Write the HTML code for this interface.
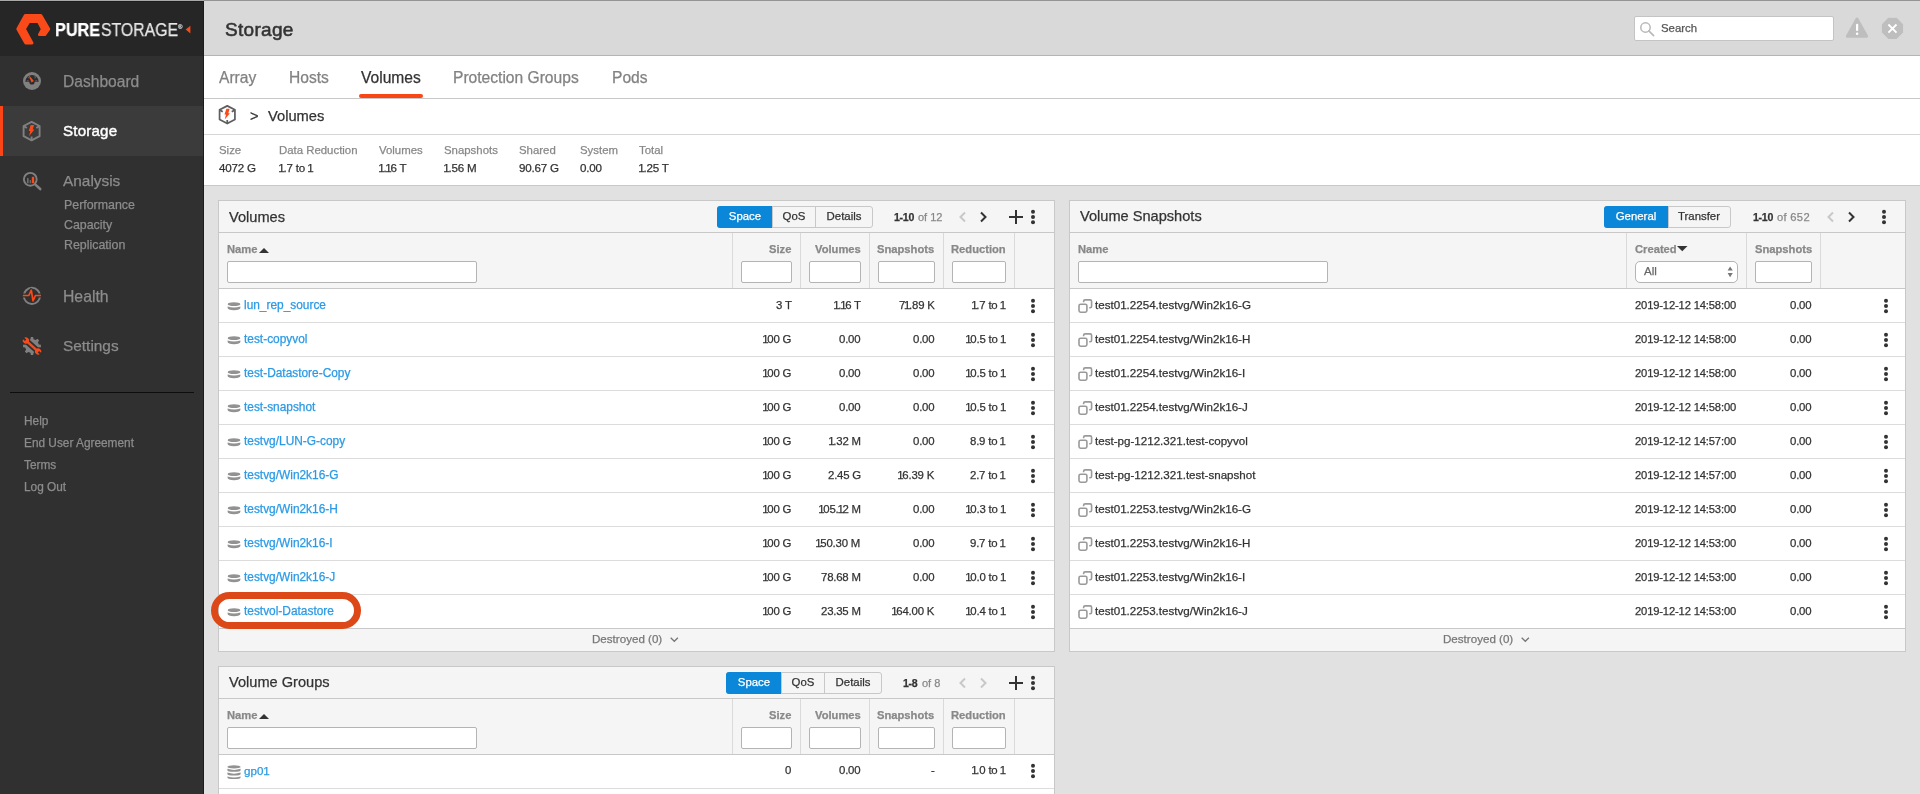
<!DOCTYPE html>
<html><head><meta charset="utf-8"><title>Storage</title><style>
*{margin:0;padding:0;box-sizing:border-box}
html,body{width:1920px;height:794px;overflow:hidden;background:#e1e1e1;font-family:"Liberation Sans",sans-serif}
.t{position:absolute;white-space:pre;will-change:transform;-webkit-text-stroke-width:0.25px}
.r{position:absolute}
svg{position:absolute;overflow:visible}
</style></head><body>
<div class="r" style="left:0px;top:0px;width:204px;height:794px;background:#303030"></div>
<div class="r" style="left:0px;top:0px;width:204px;height:56px;background:#262626"></div>
<div class="r" style="left:0px;top:106px;width:204px;height:50px;background:#3b3b3b"></div>
<div class="r" style="left:0px;top:106px;width:3px;height:50px;background:#fa4616"></div>
<div class="r" style="left:203px;top:0px;width:1px;height:794px;background:#1c1c1c"></div>
<svg style="left:0;top:0" width="204" height="56"><path d="M25.28,15.60 L40.84,15.60 L48.71,29.02 L44.73,34.60 L39.42,34.60 L42.40,29.11 L38.30,21.40 L28.84,21.40 L24.38,29.08 L31.97,43.00 L25.77,43.00 L17.82,29.09 Z" fill="#fa4a1a" stroke="#fa4a1a" stroke-width="3" stroke-linejoin="round"/><path d="M190.4,25.8 L185.7,29.6 L190.4,33.5 Z" fill="#fa4a1a"/></svg>
<div class="t" style="left:55.00px;top:21.39px;font-size:18.2px;line-height:18.2px;color:#fff;font-weight:700;transform:scaleX(0.89);transform-origin:0 0">PURE</div>
<div class="t" style="left:100.50px;top:21.39px;font-size:18.2px;line-height:18.2px;color:#e8e8e8;transform:scaleX(0.865);transform-origin:0 0;letter-spacing:0.1px">STORAGE</div>
<div class="t" style="left:178.00px;top:23.52px;font-size:6px;line-height:6px;color:#ccc;">®</div>
<div class="t" style="left:62.90px;top:73.59px;font-size:15.6px;line-height:15.6px;color:#8c8c8c;">Dashboard</div>
<div class="t" style="left:62.90px;top:123.42px;font-size:15.1px;line-height:15.1px;color:#fff;-webkit-text-stroke:0.45px #fff;letter-spacing:0.2px">Storage</div>
<div class="t" style="left:62.90px;top:172.96px;font-size:15.4px;line-height:15.4px;color:#8c8c8c;">Analysis</div>
<div class="t" style="left:62.90px;top:288.57px;font-size:15.75px;line-height:15.75px;color:#8c8c8c;">Health</div>
<div class="t" style="left:62.90px;top:338.16px;font-size:15.4px;line-height:15.4px;color:#8c8c8c;">Settings</div>
<div class="t" style="left:63.90px;top:199.10px;font-size:12.4px;line-height:12.4px;color:#8c8c8c;">Performance</div>
<div class="t" style="left:63.90px;top:219.10px;font-size:12.4px;line-height:12.4px;color:#8c8c8c;">Capacity</div>
<div class="t" style="left:63.90px;top:239.10px;font-size:12.4px;line-height:12.4px;color:#8c8c8c;">Replication</div>
<div class="r" style="left:10px;top:392px;width:184px;height:1px;background:#0d0d0d"></div>
<div class="t" style="left:24.30px;top:415.87px;font-size:11.85px;line-height:11.85px;color:#8c8c8c;">Help</div>
<div class="t" style="left:24.30px;top:437.87px;font-size:11.85px;line-height:11.85px;color:#8c8c8c;">End User Agreement</div>
<div class="t" style="left:24.30px;top:459.87px;font-size:11.85px;line-height:11.85px;color:#8c8c8c;">Terms</div>
<div class="t" style="left:24.30px;top:481.77px;font-size:11.85px;line-height:11.85px;color:#8c8c8c;">Log Out</div>
<div class="r" style="left:0px;top:0px;width:204px;height:1px;background:#a9a9a9"></div>
<div class="r" style="left:204px;top:0px;width:1716px;height:1px;background:#949494"></div>
<div class="r" style="left:204px;top:1px;width:1716px;height:1px;background:#e2e2e2"></div>
<div class="r" style="left:204px;top:1px;width:1px;height:54px;background:#e4e4e4"></div>
<div class="r" style="left:0px;top:1px;width:203px;height:1px;background:#1e1e1e"></div>
<div class="r" style="left:204px;top:1px;width:1716px;height:54px;background:#d9d9d9"></div>
<div class="r" style="left:204px;top:55px;width:1716px;height:1px;background:#b5b5b5"></div>
<div class="t" style="left:224.60px;top:20.12px;font-size:19.0px;line-height:19.0px;color:#333;-webkit-text-stroke:0.55px #333;letter-spacing:0.3px">Storage</div>
<div class="r" style="left:1634px;top:16px;width:200px;height:25px;background:#fff;border:1px solid #c4c4c4;border-radius:2px"></div>
<div class="t" style="left:1661.30px;top:22.55px;font-size:11.4px;line-height:11.4px;color:#555;">Search</div>
<div class="r" style="left:204px;top:56px;width:1716px;height:42px;background:#fff"></div>
<div class="r" style="left:204px;top:98px;width:1716px;height:1px;background:#c8c8c8"></div>
<div class="t" style="left:218.75px;top:69.59px;font-size:15.6px;line-height:15.6px;color:#828282;">Array</div>
<div class="t" style="left:288.50px;top:69.59px;font-size:15.6px;line-height:15.6px;color:#828282;">Hosts</div>
<div class="t" style="left:360.50px;top:69.59px;font-size:15.6px;line-height:15.6px;color:#333;">Volumes</div>
<div class="t" style="left:453.00px;top:69.59px;font-size:15.6px;line-height:15.6px;color:#828282;">Protection Groups</div>
<div class="t" style="left:612.20px;top:69.59px;font-size:15.6px;line-height:15.6px;color:#828282;">Pods</div>
<div class="r" style="left:359px;top:94px;width:64px;height:4px;background:#fa4616;border-radius:2px"></div>
<div class="r" style="left:204px;top:99px;width:1716px;height:35px;background:#fff"></div>
<div class="r" style="left:204px;top:134px;width:1716px;height:1px;background:#d6d6d6"></div>
<div class="t" style="left:249.50px;top:109.06px;font-size:14.7px;line-height:14.7px;color:#333;">&gt;</div>
<div class="t" style="left:268.20px;top:109.06px;font-size:14.7px;line-height:14.7px;color:#333;">Volumes</div>
<div class="r" style="left:204px;top:135px;width:1716px;height:50px;background:#fff"></div>
<div class="r" style="left:204px;top:185px;width:1716px;height:1px;background:#c8c8c8"></div>
<div class="t" style="left:219.00px;top:144.95px;font-size:11.4px;line-height:11.4px;color:#888;">Size</div>
<div class="t" style="left:219.00px;top:162.28px;font-size:11.6px;line-height:11.6px;color:#333;letter-spacing:-0.2px">4072 G</div>
<div class="t" style="left:278.50px;top:144.95px;font-size:11.4px;line-height:11.4px;color:#888;">Data Reduction</div>
<div class="t" style="left:278.50px;top:162.28px;font-size:11.6px;line-height:11.6px;color:#333;letter-spacing:-0.2px"><span style="margin-left:-0.060em;margin-right:-0.1em">1</span>.7 to <span style="margin-left:-0.060em;margin-right:0">1</span></div>
<div class="t" style="left:378.75px;top:144.95px;font-size:11.4px;line-height:11.4px;color:#888;">Volumes</div>
<div class="t" style="left:378.75px;top:162.28px;font-size:11.6px;line-height:11.6px;color:#333;letter-spacing:-0.2px"><span style="margin-left:-0.060em;margin-right:-0.1em">1</span>.<span style="margin-left:-0.1em;margin-right:-0.1em">1</span>6 T</div>
<div class="t" style="left:443.50px;top:144.95px;font-size:11.4px;line-height:11.4px;color:#888;">Snapshots</div>
<div class="t" style="left:443.50px;top:162.28px;font-size:11.6px;line-height:11.6px;color:#333;letter-spacing:-0.2px"><span style="margin-left:-0.060em;margin-right:-0.1em">1</span>.56 M</div>
<div class="t" style="left:519.00px;top:144.95px;font-size:11.4px;line-height:11.4px;color:#888;">Shared</div>
<div class="t" style="left:519.00px;top:162.28px;font-size:11.6px;line-height:11.6px;color:#333;letter-spacing:-0.2px">90.67 G</div>
<div class="t" style="left:580.20px;top:144.95px;font-size:11.4px;line-height:11.4px;color:#888;">System</div>
<div class="t" style="left:580.20px;top:162.28px;font-size:11.6px;line-height:11.6px;color:#333;letter-spacing:-0.2px">0.00</div>
<div class="t" style="left:638.80px;top:144.95px;font-size:11.4px;line-height:11.4px;color:#888;">Total</div>
<div class="t" style="left:638.80px;top:162.28px;font-size:11.6px;line-height:11.6px;color:#333;letter-spacing:-0.2px"><span style="margin-left:-0.060em;margin-right:-0.1em">1</span>.25 T</div>
<svg style="left:23.1px;top:120.6px" width="18.0" height="20.0" viewBox="0 0 18 20"><path d="M8.6,0.9 L16.6,5.0 L16.6,15.2 L8.6,19.3 L0.6,15.2 L0.6,5.0 Z" fill="none" stroke="#808080" stroke-width="1.9" stroke-linejoin="round"/><path d="M0.8,5.1 L3.9,7.0 M16.4,5.1 L13.3,7.0 M8.6,19 L8.6,15.6" stroke="#808080" stroke-width="1.9"/><path d="M7.7,4.0 L11.1,4.0 L9.7,8.6 L11.4,8.6 L6.0,15.2 L7.3,9.9 L5.7,9.9 Z" fill="#fa4a1a"/></svg>
<svg style="left:219.0px;top:104.6px" width="17.28" height="19.2" viewBox="0 0 18 20"><path d="M8.6,0.9 L16.6,5.0 L16.6,15.2 L8.6,19.3 L0.6,15.2 L0.6,5.0 Z" fill="none" stroke="#5e5e5e" stroke-width="1.8" stroke-linejoin="round"/><path d="M0.8,5.1 L3.9,7.0 M16.4,5.1 L13.3,7.0 M8.6,19 L8.6,15.6" stroke="#5e5e5e" stroke-width="1.8"/><path d="M7.7,4.0 L11.1,4.0 L9.7,8.6 L11.4,8.6 L6.0,15.2 L7.3,9.9 L5.7,9.9 Z" fill="#fa4a1a"/></svg>
<svg style="left:22px;top:71px" width="20" height="20"><circle cx="10" cy="10" r="9" fill="#808080"/><path d="M3.3,10.8 A6.7,6.7 0 0 1 16.7,10.8 Z" fill="#2c2c2c"/><circle cx="10" cy="11" r="2.6" fill="#2c2c2c"/><path d="M4.8,9.8 L6.6,9.8 M5.9,6.2 L7.3,7.4 M13.3,4.9 L12.6,6.3 M14.1,6.2 L12.7,7.4 M15.2,9.8 L13.4,9.8" stroke="#666" stroke-width="1"/><path d="M6.2,3.3 L11.9,10.0 L9.5,11.5 Z" fill="#fa4a1a"/></svg>
<svg style="left:20px;top:168px" width="24" height="24"><circle cx="10.3" cy="11.3" r="6.4" fill="none" stroke="#808080" stroke-width="1.9"/><path d="M15.4,16.6 L20.2,21" stroke="#808080" stroke-width="2.6" stroke-linecap="round"/><rect x="7" y="10.1" width="1.6" height="5.2" fill="#707070"/><rect x="9.7" y="12.1" width="1.2" height="3.2" fill="#707070"/><rect x="11.8" y="8.8" width="2.4" height="6.4" fill="#fa4a1a"/></svg>
<svg style="left:20px;top:284px" width="24" height="24"><circle cx="11.9" cy="11.9" r="8.1" fill="none" stroke="#808080" stroke-width="2"/><path d="M2.9,11.5 L8.8,11.5 L11.3,6.2 L13,16.8 L15.4,11.5 L21,11.5" fill="none" stroke="#303030" stroke-width="4" stroke-linejoin="round"/><path d="M2.9,11.5 L8.8,11.5 L11.3,6.2 L13,16.8 L15.4,11.5 L21,11.5" fill="none" stroke="#fa4a1a" stroke-width="1.7" stroke-linejoin="round"/></svg>
<svg style="left:20px;top:334px" width="24" height="24"><path d="M18.83,10.47 L20.92,10.83 L20.92,13.17 L18.83,13.53 L17.91,15.75 L19.14,17.49 L17.49,19.14 L15.75,17.91 L13.53,18.83 L13.17,20.92 L10.83,20.92 L10.47,18.83 L8.25,17.91 L6.51,19.14 L4.86,17.49 L6.09,15.75 L5.17,13.53 L3.08,13.17 L3.08,10.83 L5.17,10.47 L6.09,8.25 L4.86,6.51 L6.51,4.86 L8.25,6.09 L10.47,5.17 L10.83,3.08 L13.17,3.08 L13.53,5.17 L15.75,6.09 L17.49,4.86 L19.14,6.51 L17.91,8.25 Z" fill="#808080"/><g transform="rotate(42 12 12)"><rect x="2.2" y="9" width="19.6" height="6" fill="#303030"/><circle cx="3.4" cy="12" r="4.1" fill="#303030"/><circle cx="20.6" cy="12" r="4.1" fill="#303030"/><rect x="4" y="10.7" width="16" height="2.6" fill="#fa4a1a"/><circle cx="3.8" cy="12" r="3.1" fill="#fa4a1a"/><circle cx="20.2" cy="12" r="3.1" fill="#fa4a1a"/><rect x="0" y="11" width="3.4" height="2" fill="#303030"/><rect x="20.6" y="11" width="3.4" height="2" fill="#303030"/></g></svg>
<svg style="left:1636px;top:18px" width="22" height="22"><circle cx="9.5" cy="9.5" r="4.7" fill="none" stroke="#b8b8b8" stroke-width="1.5"/><path d="M12.8,12.9 L17.6,17.6" stroke="#b8b8b8" stroke-width="1.6" stroke-linecap="round"/></svg>
<svg style="left:1844px;top:16px" width="26" height="24"><path d="M13,3 L22.6,20.3 L3.4,20.3 Z" fill="#bebebe" stroke="#bebebe" stroke-width="3" stroke-linejoin="round"/><rect x="12" y="7.7" width="2.2" height="7.3" rx="1" fill="#fff"/><circle cx="13.1" cy="17.8" r="1.25" fill="#fff"/></svg>
<svg style="left:1880px;top:16px" width="26" height="26"><path d="M22.57,16.57 L16.67,22.47 L8.33,22.47 L2.43,16.57 L2.43,8.23 L8.33,2.33 L16.67,2.33 L22.57,8.23 Z" fill="#bebebe" stroke="#bebebe" stroke-width="1" stroke-linejoin="round"/><path d="M8.4,8.5 L16.5,16.6 M16.5,8.5 L8.4,16.6" stroke="#fff" stroke-width="1.9"/></svg>
<div class="r" style="left:218px;top:200px;width:837px;height:452px;background:#fff;border:1px solid #c8c8c8"></div>
<div class="r" style="left:219px;top:201px;width:835px;height:87px;background:#f5f5f5"></div>
<div class="r" style="left:219px;top:232px;width:835px;height:1px;background:#c8c8c8"></div>
<div class="r" style="left:219px;top:288px;width:835px;height:1px;background:#c8c8c8"></div>
<div class="r" style="left:732px;top:233px;width:1px;height:55px;background:#dadada"></div>
<div class="r" style="left:800px;top:233px;width:1px;height:55px;background:#dadada"></div>
<div class="r" style="left:869px;top:233px;width:1px;height:55px;background:#dadada"></div>
<div class="r" style="left:943px;top:233px;width:1px;height:55px;background:#dadada"></div>
<div class="r" style="left:1014px;top:233px;width:1px;height:55px;background:#dadada"></div>
<div class="t" style="left:229.00px;top:209.64px;font-size:14.6px;line-height:14.6px;color:#333;">Volumes</div>
<div class="r" style="left:717px;top:206px;width:156px;height:22px;background:#f5f5f5;border:1px solid #c8c8c8;border-radius:3px"></div>
<div class="r" style="left:717px;top:206px;width:55px;height:22px;background:#0a87d9;border-radius:3px 0 0 3px"></div>
<div class="t" style="left:744.50px;top:210.95px;font-size:11.4px;line-height:11.4px;color:#fff;transform:translateX(-50%)">Space</div>
<div class="r" style="left:772px;top:206px;width:1px;height:22px;background:#c8c8c8"></div>
<div class="t" style="left:793.50px;top:210.95px;font-size:11.4px;line-height:11.4px;color:#333;transform:translateX(-50%)">QoS</div>
<div class="r" style="left:815px;top:206px;width:1px;height:22px;background:#c8c8c8"></div>
<div class="t" style="left:843.50px;top:210.95px;font-size:11.4px;line-height:11.4px;color:#333;transform:translateX(-50%)">Details</div>
<div class="t" style="left:894.10px;top:212.43px;font-size:10.6px;line-height:10.6px;color:#333;font-weight:700;letter-spacing:-0.3px">1-10</div>
<div class="t" style="left:917.70px;top:212.09px;font-size:11px;line-height:11px;color:#888;">of 12</div>
<svg style="left:959px;top:212px" width="7" height="10"><path d="M6,0.5 L1.5,5 L6,9.5" fill="none" stroke="#c8c8c8" stroke-width="2"/></svg>
<svg style="left:979.5px;top:212px" width="7" height="10"><path d="M1,0.5 L5.5,5 L1,9.5" fill="none" stroke="#333" stroke-width="2"/></svg>
<svg style="left:1009px;top:210px" width="14" height="14"><path d="M7,0 V14 M0,7 H14" stroke="#333" stroke-width="2"/></svg>
<svg style="left:1030px;top:209px" width="6" height="16"><circle cx="3" cy="2.8" r="2" fill="#333"/><circle cx="3" cy="8" r="2" fill="#333"/><circle cx="3" cy="13.2" r="2" fill="#333"/></svg>
<div class="t" style="left:227.40px;top:243.92px;font-size:11.2px;line-height:11.2px;color:#888;font-weight:700;">Name</div>
<svg style="left:259px;top:248px" width="10" height="5"><path d="M0,5 L5,0 L10,5 Z" fill="#333"/></svg>
<div class="r" style="left:227px;top:261px;width:250px;height:22px;background:#fff;border:1px solid #b4b4b4;border-radius:2px"></div>
<div class="t" style="right:1128.40px;top:244.02px;font-size:11.2px;line-height:11.2px;color:#888;font-weight:700;">Size</div>
<div class="r" style="left:741px;top:261px;width:51px;height:22px;background:#fff;border:1px solid #b4b4b4;border-radius:2px"></div>
<div class="t" style="right:1059.50px;top:244.02px;font-size:11.2px;line-height:11.2px;color:#888;font-weight:700;">Volumes</div>
<div class="r" style="left:809px;top:261px;width:52px;height:22px;background:#fff;border:1px solid #b4b4b4;border-radius:2px"></div>
<div class="t" style="right:985.50px;top:244.02px;font-size:11.2px;line-height:11.2px;color:#888;font-weight:700;">Snapshots</div>
<div class="r" style="left:878px;top:261px;width:57px;height:22px;background:#fff;border:1px solid #b4b4b4;border-radius:2px"></div>
<div class="t" style="right:914.40px;top:244.02px;font-size:11.2px;line-height:11.2px;color:#888;font-weight:700;">Reduction</div>
<div class="r" style="left:952px;top:261px;width:54px;height:22px;background:#fff;border:1px solid #b4b4b4;border-radius:2px"></div>
<div class="r" style="left:219px;top:322px;width:835px;height:1px;background:#dcdcdc"></div>
<svg style="left:227px;top:302px" width="16" height="10"><ellipse cx="7" cy="2.2" rx="6.3" ry="1.9" fill="#929292"/><path d="M0.6,4.4 Q7,6.6 13.4,4.4 L13.4,5.8 Q13.4,8.2 7,8.2 Q0.6,8.2 0.6,5.8 Z" fill="#929292"/></svg>
<div class="t" style="left:244.00px;top:299.53px;font-size:11.9px;line-height:11.9px;color:#2b9ae5;">lun_rep_source</div>
<div class="t" style="right:1128.40px;top:299.95px;font-size:11.4px;line-height:11.4px;color:#333;letter-spacing:-0.2px">3 T</div>
<div class="t" style="right:1059.50px;top:299.95px;font-size:11.4px;line-height:11.4px;color:#333;letter-spacing:-0.2px"><span style="margin-left:-0.060em;margin-right:-0.1em">1</span>.<span style="margin-left:-0.1em;margin-right:-0.1em">1</span>6 T</div>
<div class="t" style="right:985.50px;top:299.95px;font-size:11.4px;line-height:11.4px;color:#333;letter-spacing:-0.2px">7<span style="margin-left:-0.1em;margin-right:-0.1em">1</span>.89 K</div>
<div class="t" style="right:914.40px;top:299.95px;font-size:11.4px;line-height:11.4px;color:#333;letter-spacing:-0.2px"><span style="margin-left:-0.060em;margin-right:-0.1em">1</span>.7 to <span style="margin-left:-0.060em;margin-right:0">1</span></div>
<svg style="left:1030px;top:297.8px" width="6" height="16"><circle cx="3" cy="2.8" r="2" fill="#333"/><circle cx="3" cy="8" r="2" fill="#333"/><circle cx="3" cy="13.2" r="2" fill="#333"/></svg>
<div class="r" style="left:219px;top:356px;width:835px;height:1px;background:#dcdcdc"></div>
<svg style="left:227px;top:336px" width="16" height="10"><ellipse cx="7" cy="2.2" rx="6.3" ry="1.9" fill="#929292"/><path d="M0.6,4.4 Q7,6.6 13.4,4.4 L13.4,5.8 Q13.4,8.2 7,8.2 Q0.6,8.2 0.6,5.8 Z" fill="#929292"/></svg>
<div class="t" style="left:244.00px;top:333.53px;font-size:11.9px;line-height:11.9px;color:#2b9ae5;">test-copyvol</div>
<div class="t" style="right:1128.40px;top:333.95px;font-size:11.4px;line-height:11.4px;color:#333;letter-spacing:-0.2px"><span style="margin-left:-0.060em;margin-right:-0.1em">1</span>00 G</div>
<div class="t" style="right:1059.50px;top:333.95px;font-size:11.4px;line-height:11.4px;color:#333;letter-spacing:-0.2px">0.00</div>
<div class="t" style="right:985.50px;top:333.95px;font-size:11.4px;line-height:11.4px;color:#333;letter-spacing:-0.2px">0.00</div>
<div class="t" style="right:914.40px;top:333.95px;font-size:11.4px;line-height:11.4px;color:#333;letter-spacing:-0.2px"><span style="margin-left:-0.060em;margin-right:-0.1em">1</span>0.5 to <span style="margin-left:-0.060em;margin-right:0">1</span></div>
<svg style="left:1030px;top:331.8px" width="6" height="16"><circle cx="3" cy="2.8" r="2" fill="#333"/><circle cx="3" cy="8" r="2" fill="#333"/><circle cx="3" cy="13.2" r="2" fill="#333"/></svg>
<div class="r" style="left:219px;top:390px;width:835px;height:1px;background:#dcdcdc"></div>
<svg style="left:227px;top:370px" width="16" height="10"><ellipse cx="7" cy="2.2" rx="6.3" ry="1.9" fill="#929292"/><path d="M0.6,4.4 Q7,6.6 13.4,4.4 L13.4,5.8 Q13.4,8.2 7,8.2 Q0.6,8.2 0.6,5.8 Z" fill="#929292"/></svg>
<div class="t" style="left:244.00px;top:367.53px;font-size:11.9px;line-height:11.9px;color:#2b9ae5;">test-Datastore-Copy</div>
<div class="t" style="right:1128.40px;top:367.95px;font-size:11.4px;line-height:11.4px;color:#333;letter-spacing:-0.2px"><span style="margin-left:-0.060em;margin-right:-0.1em">1</span>00 G</div>
<div class="t" style="right:1059.50px;top:367.95px;font-size:11.4px;line-height:11.4px;color:#333;letter-spacing:-0.2px">0.00</div>
<div class="t" style="right:985.50px;top:367.95px;font-size:11.4px;line-height:11.4px;color:#333;letter-spacing:-0.2px">0.00</div>
<div class="t" style="right:914.40px;top:367.95px;font-size:11.4px;line-height:11.4px;color:#333;letter-spacing:-0.2px"><span style="margin-left:-0.060em;margin-right:-0.1em">1</span>0.5 to <span style="margin-left:-0.060em;margin-right:0">1</span></div>
<svg style="left:1030px;top:365.8px" width="6" height="16"><circle cx="3" cy="2.8" r="2" fill="#333"/><circle cx="3" cy="8" r="2" fill="#333"/><circle cx="3" cy="13.2" r="2" fill="#333"/></svg>
<div class="r" style="left:219px;top:424px;width:835px;height:1px;background:#dcdcdc"></div>
<svg style="left:227px;top:404px" width="16" height="10"><ellipse cx="7" cy="2.2" rx="6.3" ry="1.9" fill="#929292"/><path d="M0.6,4.4 Q7,6.6 13.4,4.4 L13.4,5.8 Q13.4,8.2 7,8.2 Q0.6,8.2 0.6,5.8 Z" fill="#929292"/></svg>
<div class="t" style="left:244.00px;top:401.53px;font-size:11.9px;line-height:11.9px;color:#2b9ae5;">test-snapshot</div>
<div class="t" style="right:1128.40px;top:401.95px;font-size:11.4px;line-height:11.4px;color:#333;letter-spacing:-0.2px"><span style="margin-left:-0.060em;margin-right:-0.1em">1</span>00 G</div>
<div class="t" style="right:1059.50px;top:401.95px;font-size:11.4px;line-height:11.4px;color:#333;letter-spacing:-0.2px">0.00</div>
<div class="t" style="right:985.50px;top:401.95px;font-size:11.4px;line-height:11.4px;color:#333;letter-spacing:-0.2px">0.00</div>
<div class="t" style="right:914.40px;top:401.95px;font-size:11.4px;line-height:11.4px;color:#333;letter-spacing:-0.2px"><span style="margin-left:-0.060em;margin-right:-0.1em">1</span>0.5 to <span style="margin-left:-0.060em;margin-right:0">1</span></div>
<svg style="left:1030px;top:399.8px" width="6" height="16"><circle cx="3" cy="2.8" r="2" fill="#333"/><circle cx="3" cy="8" r="2" fill="#333"/><circle cx="3" cy="13.2" r="2" fill="#333"/></svg>
<div class="r" style="left:219px;top:458px;width:835px;height:1px;background:#dcdcdc"></div>
<svg style="left:227px;top:438px" width="16" height="10"><ellipse cx="7" cy="2.2" rx="6.3" ry="1.9" fill="#929292"/><path d="M0.6,4.4 Q7,6.6 13.4,4.4 L13.4,5.8 Q13.4,8.2 7,8.2 Q0.6,8.2 0.6,5.8 Z" fill="#929292"/></svg>
<div class="t" style="left:244.00px;top:435.53px;font-size:11.9px;line-height:11.9px;color:#2b9ae5;">testvg/LUN-G-copy</div>
<div class="t" style="right:1128.40px;top:435.95px;font-size:11.4px;line-height:11.4px;color:#333;letter-spacing:-0.2px"><span style="margin-left:-0.060em;margin-right:-0.1em">1</span>00 G</div>
<div class="t" style="right:1059.50px;top:435.95px;font-size:11.4px;line-height:11.4px;color:#333;letter-spacing:-0.2px"><span style="margin-left:-0.060em;margin-right:-0.1em">1</span>.32 M</div>
<div class="t" style="right:985.50px;top:435.95px;font-size:11.4px;line-height:11.4px;color:#333;letter-spacing:-0.2px">0.00</div>
<div class="t" style="right:914.40px;top:435.95px;font-size:11.4px;line-height:11.4px;color:#333;letter-spacing:-0.2px">8.9 to <span style="margin-left:-0.060em;margin-right:0">1</span></div>
<svg style="left:1030px;top:433.8px" width="6" height="16"><circle cx="3" cy="2.8" r="2" fill="#333"/><circle cx="3" cy="8" r="2" fill="#333"/><circle cx="3" cy="13.2" r="2" fill="#333"/></svg>
<div class="r" style="left:219px;top:492px;width:835px;height:1px;background:#dcdcdc"></div>
<svg style="left:227px;top:472px" width="16" height="10"><ellipse cx="7" cy="2.2" rx="6.3" ry="1.9" fill="#929292"/><path d="M0.6,4.4 Q7,6.6 13.4,4.4 L13.4,5.8 Q13.4,8.2 7,8.2 Q0.6,8.2 0.6,5.8 Z" fill="#929292"/></svg>
<div class="t" style="left:244.00px;top:469.53px;font-size:11.9px;line-height:11.9px;color:#2b9ae5;">testvg/Win2k16-G</div>
<div class="t" style="right:1128.40px;top:469.95px;font-size:11.4px;line-height:11.4px;color:#333;letter-spacing:-0.2px"><span style="margin-left:-0.060em;margin-right:-0.1em">1</span>00 G</div>
<div class="t" style="right:1059.50px;top:469.95px;font-size:11.4px;line-height:11.4px;color:#333;letter-spacing:-0.2px">2.45 G</div>
<div class="t" style="right:985.50px;top:469.95px;font-size:11.4px;line-height:11.4px;color:#333;letter-spacing:-0.2px"><span style="margin-left:-0.060em;margin-right:-0.1em">1</span>6.39 K</div>
<div class="t" style="right:914.40px;top:469.95px;font-size:11.4px;line-height:11.4px;color:#333;letter-spacing:-0.2px">2.7 to <span style="margin-left:-0.060em;margin-right:0">1</span></div>
<svg style="left:1030px;top:467.8px" width="6" height="16"><circle cx="3" cy="2.8" r="2" fill="#333"/><circle cx="3" cy="8" r="2" fill="#333"/><circle cx="3" cy="13.2" r="2" fill="#333"/></svg>
<div class="r" style="left:219px;top:526px;width:835px;height:1px;background:#dcdcdc"></div>
<svg style="left:227px;top:506px" width="16" height="10"><ellipse cx="7" cy="2.2" rx="6.3" ry="1.9" fill="#929292"/><path d="M0.6,4.4 Q7,6.6 13.4,4.4 L13.4,5.8 Q13.4,8.2 7,8.2 Q0.6,8.2 0.6,5.8 Z" fill="#929292"/></svg>
<div class="t" style="left:244.00px;top:503.53px;font-size:11.9px;line-height:11.9px;color:#2b9ae5;">testvg/Win2k16-H</div>
<div class="t" style="right:1128.40px;top:503.95px;font-size:11.4px;line-height:11.4px;color:#333;letter-spacing:-0.2px"><span style="margin-left:-0.060em;margin-right:-0.1em">1</span>00 G</div>
<div class="t" style="right:1059.50px;top:503.95px;font-size:11.4px;line-height:11.4px;color:#333;letter-spacing:-0.2px"><span style="margin-left:-0.060em;margin-right:-0.1em">1</span>05.<span style="margin-left:-0.1em;margin-right:-0.1em">1</span>2 M</div>
<div class="t" style="right:985.50px;top:503.95px;font-size:11.4px;line-height:11.4px;color:#333;letter-spacing:-0.2px">0.00</div>
<div class="t" style="right:914.40px;top:503.95px;font-size:11.4px;line-height:11.4px;color:#333;letter-spacing:-0.2px"><span style="margin-left:-0.060em;margin-right:-0.1em">1</span>0.3 to <span style="margin-left:-0.060em;margin-right:0">1</span></div>
<svg style="left:1030px;top:501.8px" width="6" height="16"><circle cx="3" cy="2.8" r="2" fill="#333"/><circle cx="3" cy="8" r="2" fill="#333"/><circle cx="3" cy="13.2" r="2" fill="#333"/></svg>
<div class="r" style="left:219px;top:560px;width:835px;height:1px;background:#dcdcdc"></div>
<svg style="left:227px;top:540px" width="16" height="10"><ellipse cx="7" cy="2.2" rx="6.3" ry="1.9" fill="#929292"/><path d="M0.6,4.4 Q7,6.6 13.4,4.4 L13.4,5.8 Q13.4,8.2 7,8.2 Q0.6,8.2 0.6,5.8 Z" fill="#929292"/></svg>
<div class="t" style="left:244.00px;top:537.53px;font-size:11.9px;line-height:11.9px;color:#2b9ae5;">testvg/Win2k16-I</div>
<div class="t" style="right:1128.40px;top:537.95px;font-size:11.4px;line-height:11.4px;color:#333;letter-spacing:-0.2px"><span style="margin-left:-0.060em;margin-right:-0.1em">1</span>00 G</div>
<div class="t" style="right:1059.50px;top:537.95px;font-size:11.4px;line-height:11.4px;color:#333;letter-spacing:-0.2px"><span style="margin-left:-0.060em;margin-right:-0.1em">1</span>50.30 M</div>
<div class="t" style="right:985.50px;top:537.95px;font-size:11.4px;line-height:11.4px;color:#333;letter-spacing:-0.2px">0.00</div>
<div class="t" style="right:914.40px;top:537.95px;font-size:11.4px;line-height:11.4px;color:#333;letter-spacing:-0.2px">9.7 to <span style="margin-left:-0.060em;margin-right:0">1</span></div>
<svg style="left:1030px;top:535.8px" width="6" height="16"><circle cx="3" cy="2.8" r="2" fill="#333"/><circle cx="3" cy="8" r="2" fill="#333"/><circle cx="3" cy="13.2" r="2" fill="#333"/></svg>
<div class="r" style="left:219px;top:594px;width:835px;height:1px;background:#dcdcdc"></div>
<svg style="left:227px;top:574px" width="16" height="10"><ellipse cx="7" cy="2.2" rx="6.3" ry="1.9" fill="#929292"/><path d="M0.6,4.4 Q7,6.6 13.4,4.4 L13.4,5.8 Q13.4,8.2 7,8.2 Q0.6,8.2 0.6,5.8 Z" fill="#929292"/></svg>
<div class="t" style="left:244.00px;top:571.53px;font-size:11.9px;line-height:11.9px;color:#2b9ae5;">testvg/Win2k16-J</div>
<div class="t" style="right:1128.40px;top:571.95px;font-size:11.4px;line-height:11.4px;color:#333;letter-spacing:-0.2px"><span style="margin-left:-0.060em;margin-right:-0.1em">1</span>00 G</div>
<div class="t" style="right:1059.50px;top:571.95px;font-size:11.4px;line-height:11.4px;color:#333;letter-spacing:-0.2px">78.68 M</div>
<div class="t" style="right:985.50px;top:571.95px;font-size:11.4px;line-height:11.4px;color:#333;letter-spacing:-0.2px">0.00</div>
<div class="t" style="right:914.40px;top:571.95px;font-size:11.4px;line-height:11.4px;color:#333;letter-spacing:-0.2px"><span style="margin-left:-0.060em;margin-right:-0.1em">1</span>0.0 to <span style="margin-left:-0.060em;margin-right:0">1</span></div>
<svg style="left:1030px;top:569.8px" width="6" height="16"><circle cx="3" cy="2.8" r="2" fill="#333"/><circle cx="3" cy="8" r="2" fill="#333"/><circle cx="3" cy="13.2" r="2" fill="#333"/></svg>
<div class="r" style="left:219px;top:628px;width:835px;height:1px;background:#dcdcdc"></div>
<svg style="left:227px;top:608px" width="16" height="10"><ellipse cx="7" cy="2.2" rx="6.3" ry="1.9" fill="#929292"/><path d="M0.6,4.4 Q7,6.6 13.4,4.4 L13.4,5.8 Q13.4,8.2 7,8.2 Q0.6,8.2 0.6,5.8 Z" fill="#929292"/></svg>
<div class="t" style="left:244.00px;top:605.53px;font-size:11.9px;line-height:11.9px;color:#2b9ae5;">testvol-Datastore</div>
<div class="t" style="right:1128.40px;top:605.95px;font-size:11.4px;line-height:11.4px;color:#333;letter-spacing:-0.2px"><span style="margin-left:-0.060em;margin-right:-0.1em">1</span>00 G</div>
<div class="t" style="right:1059.50px;top:605.95px;font-size:11.4px;line-height:11.4px;color:#333;letter-spacing:-0.2px">23.35 M</div>
<div class="t" style="right:985.50px;top:605.95px;font-size:11.4px;line-height:11.4px;color:#333;letter-spacing:-0.2px"><span style="margin-left:-0.060em;margin-right:-0.1em">1</span>64.00 K</div>
<div class="t" style="right:914.40px;top:605.95px;font-size:11.4px;line-height:11.4px;color:#333;letter-spacing:-0.2px"><span style="margin-left:-0.060em;margin-right:-0.1em">1</span>0.4 to <span style="margin-left:-0.060em;margin-right:0">1</span></div>
<svg style="left:1030px;top:603.8px" width="6" height="16"><circle cx="3" cy="2.8" r="2" fill="#333"/><circle cx="3" cy="8" r="2" fill="#333"/><circle cx="3" cy="13.2" r="2" fill="#333"/></svg>
<div class="r" style="left:219px;top:629px;width:835px;height:22px;background:#f5f5f5"></div>
<div class="r" style="left:219px;top:628px;width:835px;height:1px;background:#c8c8c8"></div>
<div class="t" style="left:591.70px;top:633.08px;font-size:11.6px;line-height:11.6px;color:#777;">Destroyed (0)</div>
<svg style="left:670px;top:637px" width="9" height="6"><path d="M0.7,0.7 L4.3,4.3 L7.9,0.7" fill="none" stroke="#777" stroke-width="1.3"/></svg>
<div class="r" style="left:1069px;top:200px;width:837px;height:452px;background:#fff;border:1px solid #c8c8c8"></div>
<div class="r" style="left:1070px;top:201px;width:835px;height:87px;background:#f5f5f5"></div>
<div class="r" style="left:1070px;top:232px;width:835px;height:1px;background:#c8c8c8"></div>
<div class="r" style="left:1070px;top:288px;width:835px;height:1px;background:#c8c8c8"></div>
<div class="r" style="left:1626px;top:233px;width:1px;height:55px;background:#dadada"></div>
<div class="r" style="left:1746px;top:233px;width:1px;height:55px;background:#dadada"></div>
<div class="r" style="left:1820px;top:233px;width:1px;height:55px;background:#dadada"></div>
<div class="t" style="left:1080.20px;top:209.24px;font-size:14.6px;line-height:14.6px;color:#333;">Volume Snapshots</div>
<div class="r" style="left:1604px;top:206px;width:127px;height:22px;background:#f5f5f5;border:1px solid #c8c8c8;border-radius:3px"></div>
<div class="r" style="left:1604px;top:206px;width:64px;height:22px;background:#0a87d9;border-radius:3px 0 0 3px"></div>
<div class="t" style="left:1636.00px;top:210.95px;font-size:11.4px;line-height:11.4px;color:#fff;transform:translateX(-50%)">General</div>
<div class="r" style="left:1668px;top:206px;width:1px;height:22px;background:#c8c8c8"></div>
<div class="t" style="left:1699.00px;top:210.95px;font-size:11.4px;line-height:11.4px;color:#333;transform:translateX(-50%)">Transfer</div>
<div class="t" style="left:1752.60px;top:212.43px;font-size:10.6px;line-height:10.6px;color:#333;font-weight:700;letter-spacing:-0.3px">1-10</div>
<div class="t" style="left:1776.60px;top:211.92px;font-size:11.2px;line-height:11.2px;color:#888;letter-spacing:0.3px">of 652</div>
<svg style="left:1827px;top:212px" width="7" height="10"><path d="M6,0.5 L1.5,5 L6,9.5" fill="none" stroke="#c8c8c8" stroke-width="2"/></svg>
<svg style="left:1847.5px;top:212px" width="7" height="10"><path d="M1,0.5 L5.5,5 L1,9.5" fill="none" stroke="#333" stroke-width="2"/></svg>
<svg style="left:1881px;top:209px" width="6" height="16"><circle cx="3" cy="2.8" r="2" fill="#333"/><circle cx="3" cy="8" r="2" fill="#333"/><circle cx="3" cy="13.2" r="2" fill="#333"/></svg>
<div class="t" style="left:1078.30px;top:243.92px;font-size:11.2px;line-height:11.2px;color:#888;font-weight:700;">Name</div>
<div class="r" style="left:1078px;top:261px;width:250px;height:22px;background:#fff;border:1px solid #b4b4b4;border-radius:2px"></div>
<div class="t" style="left:1635.30px;top:243.92px;font-size:11.2px;line-height:11.2px;color:#888;font-weight:700;">Created</div>
<svg style="left:1677px;top:246px" width="11" height="6"><path d="M0,0 L10.5,0 L5.25,5.2 Z" fill="#333"/></svg>
<div class="r" style="left:1635px;top:261px;width:103px;height:22px;background:#fff;border:1px solid #b4b4b4;border-radius:5px"></div>
<div class="t" style="left:1644.00px;top:265.48px;font-size:11.6px;line-height:11.6px;color:#666;">All</div>
<svg style="left:1727px;top:266px" width="7" height="12"><path d="M0.6,4.6 L3.1,0.6 L5.8,4.6 Z M0.6,7.0 L3.1,11.2 L5.8,7.0 Z" fill="#777"/></svg>
<div class="t" style="right:108.30px;top:244.02px;font-size:11.2px;line-height:11.2px;color:#888;font-weight:700;">Snapshots</div>
<div class="r" style="left:1755px;top:261px;width:57px;height:22px;background:#fff;border:1px solid #b4b4b4;border-radius:2px"></div>
<div class="r" style="left:1070px;top:322px;width:835px;height:1px;background:#dcdcdc"></div>
<svg style="left:1077.5px;top:298.5px" width="16" height="16"><path d="M5.6,3.2 V2.4 Q5.6,0.9 7.1,0.9 H12.1 Q13.6,0.9 13.6,2.4 V7.3 Q13.6,8.8 12.1,8.8 H11.2" fill="none" stroke="#9a9a9a" stroke-width="1.6"/><rect x="1" y="5.2" width="7.9" height="8" rx="1.6" fill="none" stroke="#9a9a9a" stroke-width="1.6"/></svg>
<div class="t" style="left:1095.00px;top:299.18px;font-size:11.6px;line-height:11.6px;color:#333;">test01.2254.testvg/Win2k16-G</div>
<div class="t" style="left:1634.50px;top:300.12px;font-size:11.2px;line-height:11.2px;color:#333;letter-spacing:-0.15px">2019-12-12 14:58:00</div>
<div class="t" style="right:108.30px;top:299.95px;font-size:11.4px;line-height:11.4px;color:#333;letter-spacing:-0.2px">0.00</div>
<svg style="left:1883px;top:297.8px" width="6" height="16"><circle cx="3" cy="2.8" r="2" fill="#333"/><circle cx="3" cy="8" r="2" fill="#333"/><circle cx="3" cy="13.2" r="2" fill="#333"/></svg>
<div class="r" style="left:1070px;top:356px;width:835px;height:1px;background:#dcdcdc"></div>
<svg style="left:1077.5px;top:332.5px" width="16" height="16"><path d="M5.6,3.2 V2.4 Q5.6,0.9 7.1,0.9 H12.1 Q13.6,0.9 13.6,2.4 V7.3 Q13.6,8.8 12.1,8.8 H11.2" fill="none" stroke="#9a9a9a" stroke-width="1.6"/><rect x="1" y="5.2" width="7.9" height="8" rx="1.6" fill="none" stroke="#9a9a9a" stroke-width="1.6"/></svg>
<div class="t" style="left:1095.00px;top:333.18px;font-size:11.6px;line-height:11.6px;color:#333;">test01.2254.testvg/Win2k16-H</div>
<div class="t" style="left:1634.50px;top:334.12px;font-size:11.2px;line-height:11.2px;color:#333;letter-spacing:-0.15px">2019-12-12 14:58:00</div>
<div class="t" style="right:108.30px;top:333.95px;font-size:11.4px;line-height:11.4px;color:#333;letter-spacing:-0.2px">0.00</div>
<svg style="left:1883px;top:331.8px" width="6" height="16"><circle cx="3" cy="2.8" r="2" fill="#333"/><circle cx="3" cy="8" r="2" fill="#333"/><circle cx="3" cy="13.2" r="2" fill="#333"/></svg>
<div class="r" style="left:1070px;top:390px;width:835px;height:1px;background:#dcdcdc"></div>
<svg style="left:1077.5px;top:366.5px" width="16" height="16"><path d="M5.6,3.2 V2.4 Q5.6,0.9 7.1,0.9 H12.1 Q13.6,0.9 13.6,2.4 V7.3 Q13.6,8.8 12.1,8.8 H11.2" fill="none" stroke="#9a9a9a" stroke-width="1.6"/><rect x="1" y="5.2" width="7.9" height="8" rx="1.6" fill="none" stroke="#9a9a9a" stroke-width="1.6"/></svg>
<div class="t" style="left:1095.00px;top:367.18px;font-size:11.6px;line-height:11.6px;color:#333;">test01.2254.testvg/Win2k16-I</div>
<div class="t" style="left:1634.50px;top:368.12px;font-size:11.2px;line-height:11.2px;color:#333;letter-spacing:-0.15px">2019-12-12 14:58:00</div>
<div class="t" style="right:108.30px;top:367.95px;font-size:11.4px;line-height:11.4px;color:#333;letter-spacing:-0.2px">0.00</div>
<svg style="left:1883px;top:365.8px" width="6" height="16"><circle cx="3" cy="2.8" r="2" fill="#333"/><circle cx="3" cy="8" r="2" fill="#333"/><circle cx="3" cy="13.2" r="2" fill="#333"/></svg>
<div class="r" style="left:1070px;top:424px;width:835px;height:1px;background:#dcdcdc"></div>
<svg style="left:1077.5px;top:400.5px" width="16" height="16"><path d="M5.6,3.2 V2.4 Q5.6,0.9 7.1,0.9 H12.1 Q13.6,0.9 13.6,2.4 V7.3 Q13.6,8.8 12.1,8.8 H11.2" fill="none" stroke="#9a9a9a" stroke-width="1.6"/><rect x="1" y="5.2" width="7.9" height="8" rx="1.6" fill="none" stroke="#9a9a9a" stroke-width="1.6"/></svg>
<div class="t" style="left:1095.00px;top:401.18px;font-size:11.6px;line-height:11.6px;color:#333;">test01.2254.testvg/Win2k16-J</div>
<div class="t" style="left:1634.50px;top:402.12px;font-size:11.2px;line-height:11.2px;color:#333;letter-spacing:-0.15px">2019-12-12 14:58:00</div>
<div class="t" style="right:108.30px;top:401.95px;font-size:11.4px;line-height:11.4px;color:#333;letter-spacing:-0.2px">0.00</div>
<svg style="left:1883px;top:399.8px" width="6" height="16"><circle cx="3" cy="2.8" r="2" fill="#333"/><circle cx="3" cy="8" r="2" fill="#333"/><circle cx="3" cy="13.2" r="2" fill="#333"/></svg>
<div class="r" style="left:1070px;top:458px;width:835px;height:1px;background:#dcdcdc"></div>
<svg style="left:1077.5px;top:434.5px" width="16" height="16"><path d="M5.6,3.2 V2.4 Q5.6,0.9 7.1,0.9 H12.1 Q13.6,0.9 13.6,2.4 V7.3 Q13.6,8.8 12.1,8.8 H11.2" fill="none" stroke="#9a9a9a" stroke-width="1.6"/><rect x="1" y="5.2" width="7.9" height="8" rx="1.6" fill="none" stroke="#9a9a9a" stroke-width="1.6"/></svg>
<div class="t" style="left:1095.00px;top:435.18px;font-size:11.6px;line-height:11.6px;color:#333;">test-pg-1212.321.test-copyvol</div>
<div class="t" style="left:1634.50px;top:436.12px;font-size:11.2px;line-height:11.2px;color:#333;letter-spacing:-0.15px">2019-12-12 14:57:00</div>
<div class="t" style="right:108.30px;top:435.95px;font-size:11.4px;line-height:11.4px;color:#333;letter-spacing:-0.2px">0.00</div>
<svg style="left:1883px;top:433.8px" width="6" height="16"><circle cx="3" cy="2.8" r="2" fill="#333"/><circle cx="3" cy="8" r="2" fill="#333"/><circle cx="3" cy="13.2" r="2" fill="#333"/></svg>
<div class="r" style="left:1070px;top:492px;width:835px;height:1px;background:#dcdcdc"></div>
<svg style="left:1077.5px;top:468.5px" width="16" height="16"><path d="M5.6,3.2 V2.4 Q5.6,0.9 7.1,0.9 H12.1 Q13.6,0.9 13.6,2.4 V7.3 Q13.6,8.8 12.1,8.8 H11.2" fill="none" stroke="#9a9a9a" stroke-width="1.6"/><rect x="1" y="5.2" width="7.9" height="8" rx="1.6" fill="none" stroke="#9a9a9a" stroke-width="1.6"/></svg>
<div class="t" style="left:1095.00px;top:469.18px;font-size:11.6px;line-height:11.6px;color:#333;">test-pg-1212.321.test-snapshot</div>
<div class="t" style="left:1634.50px;top:470.12px;font-size:11.2px;line-height:11.2px;color:#333;letter-spacing:-0.15px">2019-12-12 14:57:00</div>
<div class="t" style="right:108.30px;top:469.95px;font-size:11.4px;line-height:11.4px;color:#333;letter-spacing:-0.2px">0.00</div>
<svg style="left:1883px;top:467.8px" width="6" height="16"><circle cx="3" cy="2.8" r="2" fill="#333"/><circle cx="3" cy="8" r="2" fill="#333"/><circle cx="3" cy="13.2" r="2" fill="#333"/></svg>
<div class="r" style="left:1070px;top:526px;width:835px;height:1px;background:#dcdcdc"></div>
<svg style="left:1077.5px;top:502.5px" width="16" height="16"><path d="M5.6,3.2 V2.4 Q5.6,0.9 7.1,0.9 H12.1 Q13.6,0.9 13.6,2.4 V7.3 Q13.6,8.8 12.1,8.8 H11.2" fill="none" stroke="#9a9a9a" stroke-width="1.6"/><rect x="1" y="5.2" width="7.9" height="8" rx="1.6" fill="none" stroke="#9a9a9a" stroke-width="1.6"/></svg>
<div class="t" style="left:1095.00px;top:503.18px;font-size:11.6px;line-height:11.6px;color:#333;">test01.2253.testvg/Win2k16-G</div>
<div class="t" style="left:1634.50px;top:504.12px;font-size:11.2px;line-height:11.2px;color:#333;letter-spacing:-0.15px">2019-12-12 14:53:00</div>
<div class="t" style="right:108.30px;top:503.95px;font-size:11.4px;line-height:11.4px;color:#333;letter-spacing:-0.2px">0.00</div>
<svg style="left:1883px;top:501.8px" width="6" height="16"><circle cx="3" cy="2.8" r="2" fill="#333"/><circle cx="3" cy="8" r="2" fill="#333"/><circle cx="3" cy="13.2" r="2" fill="#333"/></svg>
<div class="r" style="left:1070px;top:560px;width:835px;height:1px;background:#dcdcdc"></div>
<svg style="left:1077.5px;top:536.5px" width="16" height="16"><path d="M5.6,3.2 V2.4 Q5.6,0.9 7.1,0.9 H12.1 Q13.6,0.9 13.6,2.4 V7.3 Q13.6,8.8 12.1,8.8 H11.2" fill="none" stroke="#9a9a9a" stroke-width="1.6"/><rect x="1" y="5.2" width="7.9" height="8" rx="1.6" fill="none" stroke="#9a9a9a" stroke-width="1.6"/></svg>
<div class="t" style="left:1095.00px;top:537.18px;font-size:11.6px;line-height:11.6px;color:#333;">test01.2253.testvg/Win2k16-H</div>
<div class="t" style="left:1634.50px;top:538.12px;font-size:11.2px;line-height:11.2px;color:#333;letter-spacing:-0.15px">2019-12-12 14:53:00</div>
<div class="t" style="right:108.30px;top:537.95px;font-size:11.4px;line-height:11.4px;color:#333;letter-spacing:-0.2px">0.00</div>
<svg style="left:1883px;top:535.8px" width="6" height="16"><circle cx="3" cy="2.8" r="2" fill="#333"/><circle cx="3" cy="8" r="2" fill="#333"/><circle cx="3" cy="13.2" r="2" fill="#333"/></svg>
<div class="r" style="left:1070px;top:594px;width:835px;height:1px;background:#dcdcdc"></div>
<svg style="left:1077.5px;top:570.5px" width="16" height="16"><path d="M5.6,3.2 V2.4 Q5.6,0.9 7.1,0.9 H12.1 Q13.6,0.9 13.6,2.4 V7.3 Q13.6,8.8 12.1,8.8 H11.2" fill="none" stroke="#9a9a9a" stroke-width="1.6"/><rect x="1" y="5.2" width="7.9" height="8" rx="1.6" fill="none" stroke="#9a9a9a" stroke-width="1.6"/></svg>
<div class="t" style="left:1095.00px;top:571.18px;font-size:11.6px;line-height:11.6px;color:#333;">test01.2253.testvg/Win2k16-I</div>
<div class="t" style="left:1634.50px;top:572.12px;font-size:11.2px;line-height:11.2px;color:#333;letter-spacing:-0.15px">2019-12-12 14:53:00</div>
<div class="t" style="right:108.30px;top:571.95px;font-size:11.4px;line-height:11.4px;color:#333;letter-spacing:-0.2px">0.00</div>
<svg style="left:1883px;top:569.8px" width="6" height="16"><circle cx="3" cy="2.8" r="2" fill="#333"/><circle cx="3" cy="8" r="2" fill="#333"/><circle cx="3" cy="13.2" r="2" fill="#333"/></svg>
<div class="r" style="left:1070px;top:628px;width:835px;height:1px;background:#dcdcdc"></div>
<svg style="left:1077.5px;top:604.5px" width="16" height="16"><path d="M5.6,3.2 V2.4 Q5.6,0.9 7.1,0.9 H12.1 Q13.6,0.9 13.6,2.4 V7.3 Q13.6,8.8 12.1,8.8 H11.2" fill="none" stroke="#9a9a9a" stroke-width="1.6"/><rect x="1" y="5.2" width="7.9" height="8" rx="1.6" fill="none" stroke="#9a9a9a" stroke-width="1.6"/></svg>
<div class="t" style="left:1095.00px;top:605.18px;font-size:11.6px;line-height:11.6px;color:#333;">test01.2253.testvg/Win2k16-J</div>
<div class="t" style="left:1634.50px;top:606.12px;font-size:11.2px;line-height:11.2px;color:#333;letter-spacing:-0.15px">2019-12-12 14:53:00</div>
<div class="t" style="right:108.30px;top:605.95px;font-size:11.4px;line-height:11.4px;color:#333;letter-spacing:-0.2px">0.00</div>
<svg style="left:1883px;top:603.8px" width="6" height="16"><circle cx="3" cy="2.8" r="2" fill="#333"/><circle cx="3" cy="8" r="2" fill="#333"/><circle cx="3" cy="13.2" r="2" fill="#333"/></svg>
<div class="r" style="left:1070px;top:629px;width:835px;height:22px;background:#f5f5f5"></div>
<div class="r" style="left:1070px;top:628px;width:835px;height:1px;background:#c8c8c8"></div>
<div class="t" style="left:1442.50px;top:633.08px;font-size:11.6px;line-height:11.6px;color:#777;">Destroyed (0)</div>
<svg style="left:1521px;top:637px" width="9" height="6"><path d="M0.7,0.7 L4.3,4.3 L7.9,0.7" fill="none" stroke="#777" stroke-width="1.3"/></svg>
<div class="r" style="left:218px;top:666px;width:837px;height:200px;background:#fff;border:1px solid #c8c8c8"></div>
<div class="r" style="left:219px;top:667px;width:835px;height:87px;background:#f5f5f5"></div>
<div class="r" style="left:219px;top:698px;width:835px;height:1px;background:#c8c8c8"></div>
<div class="r" style="left:219px;top:754px;width:835px;height:1px;background:#c8c8c8"></div>
<div class="r" style="left:732px;top:699px;width:1px;height:55px;background:#dadada"></div>
<div class="r" style="left:800px;top:699px;width:1px;height:55px;background:#dadada"></div>
<div class="r" style="left:869px;top:699px;width:1px;height:55px;background:#dadada"></div>
<div class="r" style="left:943px;top:699px;width:1px;height:55px;background:#dadada"></div>
<div class="r" style="left:1014px;top:699px;width:1px;height:55px;background:#dadada"></div>
<div class="t" style="left:228.90px;top:674.64px;font-size:14.6px;line-height:14.6px;color:#333;">Volume Groups</div>
<div class="r" style="left:726px;top:672px;width:156px;height:22px;background:#f5f5f5;border:1px solid #c8c8c8;border-radius:3px"></div>
<div class="r" style="left:726px;top:672px;width:55px;height:22px;background:#0a87d9;border-radius:3px 0 0 3px"></div>
<div class="t" style="left:753.50px;top:676.95px;font-size:11.4px;line-height:11.4px;color:#fff;transform:translateX(-50%)">Space</div>
<div class="r" style="left:781px;top:672px;width:1px;height:22px;background:#c8c8c8"></div>
<div class="t" style="left:802.50px;top:676.95px;font-size:11.4px;line-height:11.4px;color:#333;transform:translateX(-50%)">QoS</div>
<div class="r" style="left:824px;top:672px;width:1px;height:22px;background:#c8c8c8"></div>
<div class="t" style="left:852.50px;top:676.95px;font-size:11.4px;line-height:11.4px;color:#333;transform:translateX(-50%)">Details</div>
<div class="t" style="left:903.00px;top:678.43px;font-size:10.6px;line-height:10.6px;color:#333;font-weight:700;letter-spacing:-0.3px">1-8</div>
<div class="t" style="left:922.00px;top:678.09px;font-size:11px;line-height:11px;color:#888;">of 8</div>
<svg style="left:959px;top:678px" width="7" height="10"><path d="M6,0.5 L1.5,5 L6,9.5" fill="none" stroke="#c8c8c8" stroke-width="2"/></svg>
<svg style="left:979.5px;top:678px" width="7" height="10"><path d="M1,0.5 L5.5,5 L1,9.5" fill="none" stroke="#c8c8c8" stroke-width="2"/></svg>
<svg style="left:1009px;top:676px" width="14" height="14"><path d="M7,0 V14 M0,7 H14" stroke="#333" stroke-width="2"/></svg>
<svg style="left:1030px;top:675px" width="6" height="16"><circle cx="3" cy="2.8" r="2" fill="#333"/><circle cx="3" cy="8" r="2" fill="#333"/><circle cx="3" cy="13.2" r="2" fill="#333"/></svg>
<div class="t" style="left:227.40px;top:709.92px;font-size:11.2px;line-height:11.2px;color:#888;font-weight:700;">Name</div>
<svg style="left:259px;top:714px" width="10" height="5"><path d="M0,5 L5,0 L10,5 Z" fill="#333"/></svg>
<div class="r" style="left:227px;top:727px;width:250px;height:22px;background:#fff;border:1px solid #b4b4b4;border-radius:2px"></div>
<div class="t" style="right:1128.40px;top:710.02px;font-size:11.2px;line-height:11.2px;color:#888;font-weight:700;">Size</div>
<div class="r" style="left:741px;top:727px;width:51px;height:22px;background:#fff;border:1px solid #b4b4b4;border-radius:2px"></div>
<div class="t" style="right:1059.50px;top:710.02px;font-size:11.2px;line-height:11.2px;color:#888;font-weight:700;">Volumes</div>
<div class="r" style="left:809px;top:727px;width:52px;height:22px;background:#fff;border:1px solid #b4b4b4;border-radius:2px"></div>
<div class="t" style="right:985.50px;top:710.02px;font-size:11.2px;line-height:11.2px;color:#888;font-weight:700;">Snapshots</div>
<div class="r" style="left:878px;top:727px;width:57px;height:22px;background:#fff;border:1px solid #b4b4b4;border-radius:2px"></div>
<div class="t" style="right:914.40px;top:710.02px;font-size:11.2px;line-height:11.2px;color:#888;font-weight:700;">Reduction</div>
<div class="r" style="left:952px;top:727px;width:54px;height:22px;background:#fff;border:1px solid #b4b4b4;border-radius:2px"></div>
<div class="r" style="left:219px;top:788px;width:835px;height:1px;background:#dcdcdc"></div>
<svg style="left:227px;top:764.5px" width="16" height="16"><ellipse cx="7" cy="1.9" rx="6.6" ry="1.6" fill="#929292"/><path d="M0.4,3.8 Q7,6 13.6,3.8 L13.6,5.3 Q13.6,6.8 7,6.8 Q0.4,6.8 0.4,5.3 Z" fill="#929292"/><path d="M0.4,7.6 Q7,9.8 13.6,7.6 L13.6,9.1 Q13.6,10.6 7,10.6 Q0.4,10.6 0.4,9.1 Z" fill="#929292"/><path d="M0.4,11.4 Q7,13.6 13.6,11.4 L13.6,12.4 Q13.6,14 7,14 Q0.4,14 0.4,12.4 Z" fill="#929292"/></svg>
<div class="t" style="left:244.00px;top:764.98px;font-size:11.6px;line-height:11.6px;color:#2b9ae5;">gp01</div>
<div class="t" style="right:1128.40px;top:765.15px;font-size:11.4px;line-height:11.4px;color:#333;letter-spacing:-0.2px">0</div>
<div class="t" style="right:1059.50px;top:765.15px;font-size:11.4px;line-height:11.4px;color:#333;letter-spacing:-0.2px">0.00</div>
<div class="t" style="right:985.50px;top:765.15px;font-size:11.4px;line-height:11.4px;color:#333;letter-spacing:-0.2px">-</div>
<div class="t" style="right:914.40px;top:765.15px;font-size:11.4px;line-height:11.4px;color:#333;letter-spacing:-0.2px"><span style="margin-left:-0.060em;margin-right:-0.1em">1</span>.0 to <span style="margin-left:-0.060em;margin-right:0">1</span></div>
<svg style="left:1030px;top:763.0px" width="6" height="16"><circle cx="3" cy="2.8" r="2" fill="#333"/><circle cx="3" cy="8" r="2" fill="#333"/><circle cx="3" cy="13.2" r="2" fill="#333"/></svg>
<div class="r" style="left:211px;top:592px;width:150px;height:37px;border:7px solid #dd4818;border-radius:18.5px"></div>
</body></html>
